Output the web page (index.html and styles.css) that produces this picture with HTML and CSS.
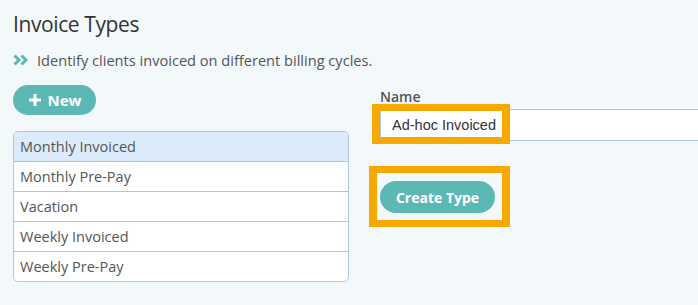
FILE: index.html
```html
<!DOCTYPE html>
<html lang="en">
<head>
    <meta charset="UTF-8">
    <meta name="viewport" content="width=device-width, initial-scale=1.0">
    <title>Invoice Types</title>
    <link rel="stylesheet" href="styles.css">
</head>
<body>

    <h1 class="page-title">Invoice Types</h1>
    <p class="page-intro">
        <svg class="intro-icon" width="15" height="12" viewBox="0 0 15 12">
            <path d="M1.5 1.5 L6 6 L1.5 10.5" fill="none" stroke="#5cb8b5" stroke-width="3"/>
            <path d="M8.5 1.5 L13 6 L8.5 10.5" fill="none" stroke="#5cb8b5" stroke-width="3"/>
        </svg>
        Identify clients invoiced on different billing cycles.
    </p>

    <div class="layout">
        <div class="left-col">
            <button class="btn btn-new" type="button">
                <svg width="14" height="14" viewBox="0 0 14 14">
                    <path d="M7 1 V13 M1 7 H13" stroke="#fff" stroke-width="3"/>
                </svg>
                New
            </button>
            <ul class="type-list">
                <li class="selected">Monthly Invoiced</li>
                <li>Monthly Pre-Pay</li>
                <li>Vacation</li>
                <li>Weekly Invoiced</li>
                <li>Weekly Pre-Pay</li>
            </ul>
        </div>

        <div class="right-col">
            <form class="type-form">
                <div class="form-group">
                    <label for="typeName">Name</label>
                    <div class="highlight-wrap">
                        <input type="text" id="typeName" name="typeName" value="Ad-hoc Invoiced">
                        <span class="highlight hl-input"></span>
                    </div>
                </div>
                <div class="highlight-wrap">
                    <button class="btn btn-create" type="submit">Create Type</button>
                    <span class="highlight hl-button"></span>
                </div>
            </form>
        </div>
    </div>

</body>
</html>
```

FILE: styles.css
```css
body {
    font-family: "Open Sans", Arial, sans-serif;
    background-color: #f3f8fb;
    color: #555;
    margin: 0;
    padding: 0 0 0 13px;
    overflow: hidden;
}
.page-title {
    font-size: 21px;
    font-weight: 400;
    letter-spacing: -0.4px;
    color: #333;
    margin: 0;
    padding-top: 10px;
    line-height: 28px;
}
.page-intro {
    font-size: 14.6px;
    margin: 12px 0 0 0;
    line-height: 20px;
    display: flex;
    align-items: center;
    gap: 9px;
}
.intro-icon {
    flex-shrink: 0;
}
.layout {
    display: flex;
    gap: 31px;
    margin-top: 15px;
}
.left-col {
    width: 336px;
    flex-shrink: 0;
}
.btn {
    background-color: #5cb8b5;
    color: #fff;
    border: none;
    border-radius: 16px;
    font-family: "Open Sans", Arial, sans-serif;
    font-weight: 700;
    font-size: 15px;
    cursor: pointer;
}
.btn-new {
    height: 30px;
    width: 83px;
    padding: 0;
    display: flex;
    align-items: center;
    justify-content: center;
    gap: 6px;
}
.type-list {
    list-style: none;
    margin: 16px 0 0 0;
    padding: 0;
    border: 1px solid #aac8e0;
    border-radius: 5px;
    background: #fff;
    overflow: hidden;
}
.type-list li {
    height: 29px;
    line-height: 29px;
    padding-left: 6px;
    font-size: 14.5px;
    border-top: 1px solid #aac8e0;
}
.type-list li:first-child {
    border-top: none;
}
.type-list li.selected {
    background-color: #dcebfb;
}
.right-col {
    flex: 1;
    padding-top: 4px;
}
.form-group {
    margin-bottom: 40px;
}
label {
    display: block;
    font-size: 14px;
    font-weight: 600;
    color: #555;
    line-height: 16px;
    margin-bottom: 4px;
}
.highlight-wrap {
    position: relative;
}
input {
    display: block;
    width: 360px;
    height: 32px;
    box-sizing: border-box;
    border: 1px solid #aac8e0;
    border-right: none;
    background: #fff;
    padding: 0 0 0 11px;
    font-family: "Liberation Sans", Arial, sans-serif;
    font-size: 14.5px;
    color: #333;
    outline: none;
}
.btn-create {
    height: 32px;
    width: 115px;
    padding: 0;
    font-size: 14px;
}
.highlight {
    position: absolute;
    border: 8px solid #f6a900;
    border-top-width: 7px;
    border-bottom-width: 7px;
    pointer-events: none;
}
.hl-input {
    left: -8px;
    top: -5px;
    width: 122px;
    height: 26px;
}
.hl-button {
    left: -11px;
    top: -15px;
    width: 125px;
    height: 47px;
}
```
